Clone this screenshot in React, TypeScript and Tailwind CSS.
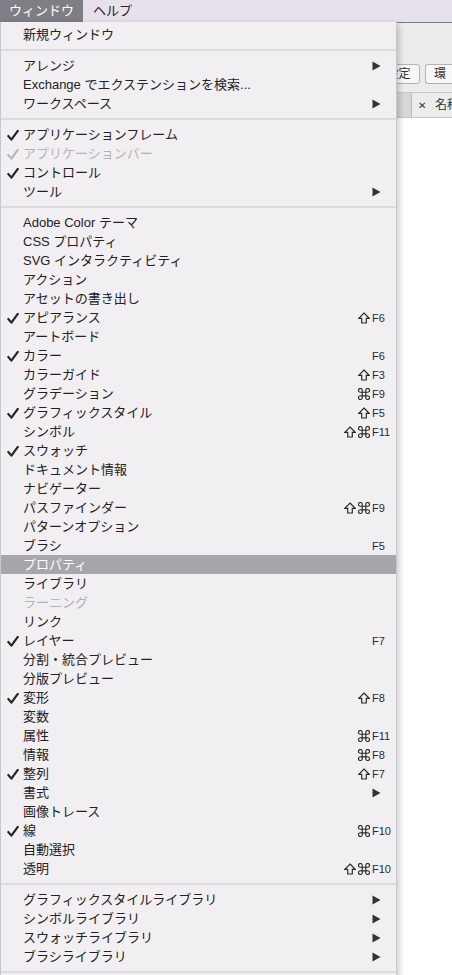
type Item = {
  label: string;
  check?: "on" | "dim";
  disabled?: boolean;
  mods?: string;
  k?: string;
  sub?: boolean;
  active?: boolean;
};

const groups: Item[][] = [
  [{ label: "新規ウィンドウ" }],
  [
    { label: "アレンジ", sub: true },
    { label: "Exchange でエクステンションを検索..." },
    { label: "ワークスペース", sub: true },
  ],
  [
    { label: "アプリケーションフレーム", check: "on" },
    { label: "アプリケーションバー", check: "dim", disabled: true },
    { label: "コントロール", check: "on" },
    { label: "ツール", sub: true },
  ],
  [
    { label: "Adobe Color テーマ" },
    { label: "CSS プロパティ" },
    { label: "SVG インタラクティビティ" },
    { label: "アクション" },
    { label: "アセットの書き出し" },
    { label: "アピアランス", check: "on", mods: "s", k: "F6" },
    { label: "アートボード" },
    { label: "カラー", check: "on", k: "F6" },
    { label: "カラーガイド", mods: "s", k: "F3" },
    { label: "グラデーション", mods: "c", k: "F9" },
    { label: "グラフィックスタイル", check: "on", mods: "s", k: "F5" },
    { label: "シンボル", mods: "sc", k: "F11" },
    { label: "スウォッチ", check: "on" },
    { label: "ドキュメント情報" },
    { label: "ナビゲーター" },
    { label: "パスファインダー", mods: "sc", k: "F9" },
    { label: "パターンオプション" },
    { label: "ブラシ", k: "F5" },
    { label: "プロパティ", active: true },
    { label: "ライブラリ" },
    { label: "ラーニング", disabled: true },
    { label: "リンク" },
    { label: "レイヤー", check: "on", k: "F7" },
    { label: "分割・統合プレビュー" },
    { label: "分版プレビュー" },
    { label: "変形", check: "on", mods: "s", k: "F8" },
    { label: "変数" },
    { label: "属性", mods: "c", k: "F11" },
    { label: "情報", mods: "c", k: "F8" },
    { label: "整列", check: "on", mods: "s", k: "F7" },
    { label: "書式", sub: true },
    { label: "画像トレース" },
    { label: "線", check: "on", mods: "c", k: "F10" },
    { label: "自動選択" },
    { label: "透明", mods: "sc", k: "F10" },
  ],
  [
    { label: "グラフィックスタイルライブラリ", sub: true },
    { label: "シンボルライブラリ", sub: true },
    { label: "スウォッチライブラリ", sub: true },
    { label: "ブラシライブラリ", sub: true },
  ],
];

const Check = ({ dim }: { dim?: boolean }) => (
  <svg width="12" height="11" viewBox="0 0 12 11" className="mt-[2px]">
    <path
      d="M1.3 6 L4.4 9.6 L10.8 0.9"
      fill="none"
      stroke={dim ? "#b9b7bc" : "#262626"}
      strokeWidth="2.2"
      strokeLinecap="round"
      strokeLinejoin="round"
    />
  </svg>
);

const Arrow = () => (
  <svg width="9" height="10" viewBox="0 0 9 10">
    <path d="M0.5 0.5 L8.5 5 L0.5 9.5 Z" fill="#333" />
  </svg>
);

// ⇧
const Shift = () => (
  <svg width="12" height="12" viewBox="0 0 12 12">
    <path
      d="M6 1 L11.2 6.4 H8.3 V11 H3.7 V6.4 H0.8 Z"
      fill="none"
      stroke="#2a2a2a"
      strokeWidth="1.2"
      strokeLinejoin="miter"
    />
  </svg>
);

// ⌘
const Cmd = () => (
  <svg width="12" height="12" viewBox="0 0 12 12">
    <path
      d="M4.2 4.2 V2.8 A1.9 1.9 0 1 0 2.8 4.2 H9.2 A1.9 1.9 0 1 0 7.8 2.8 V9.2 A1.9 1.9 0 1 0 9.2 7.8 H2.8 A1.9 1.9 0 1 0 4.2 9.2 Z"
      fill="none"
      stroke="#2a2a2a"
      strokeWidth="1.15"
    />
  </svg>
);

const Row = ({ it }: { it: Item }) => {
  const text = it.active ? "text-white" : it.disabled ? "text-[#b4b2b7]" : "text-[#222]";
  return (
    <div className={`flex h-[19px] items-center ${it.active ? "bg-[#a7a6ab]" : ""}`}>
      <div className="flex w-[22px] shrink-0 pl-[6px]">{it.check && <Check dim={it.check === "dim"} />}</div>
      <div className={`flex-1 whitespace-nowrap text-[13px] leading-[19px] ${text}`}>{it.label}</div>
      <div className="flex items-center gap-[2px]">
        {it.mods?.split("").map((m, i) => (m === "s" ? <Shift key={i} /> : <Cmd key={i} />))}
      </div>
      <div className="ml-[2px] flex w-[24px] shrink-0 items-center pr-[7px] pt-[1px] text-[11px] leading-none text-[#2a2a2a]">
        {it.sub ? <Arrow /> : it.k}
      </div>
    </div>
  );
};

const Sep = () => (
  <div className="flex h-[12px] items-center">
    <div className="h-[2px] w-full bg-[#dddbdf]" />
  </div>
);

export default function App() {
  return (
    <div className="relative h-[975px] w-[452px] overflow-hidden bg-white [font-family:'Liberation_Sans','Noto_Sans_CJK_JP',sans-serif]">
      {/* menu bar */}
      <div className="flex h-[22px] items-center bg-[#e6e1ea] text-[13px] text-[#222]">
        <div className="flex h-full items-center bg-[#7f7e84] px-[9px] text-white">ウィンドウ</div>
        <div className="pl-[10px]">ヘルプ</div>
      </div>

      {/* window behind */}
      <div className="border-t border-[#7c7b80] bg-[#ececec]">
        <div className="flex h-[69px] items-start gap-[5px] pl-[377px] pt-[41px]">
          <div className="flex h-[20px] w-[43px] shrink-0 items-center justify-center rounded-[3px] border border-[#b3b3b3] bg-[#f7f7f7] text-[12px] text-[#333]">
            設定
          </div>
          <div className="flex h-[20px] w-[40px] shrink-0 items-center rounded-l-[3px] border-y border-l border-[#b3b3b3] bg-[#f7f7f7] pl-[8px] text-[12px] text-[#333]">
            環
          </div>
        </div>
        <div className="flex h-[26px] border-y border-[#c6c6c6]">
          <div className="w-[411px] shrink-0 bg-[#d7d7d7]" />
          <div className="flex flex-1 items-center gap-[9px] whitespace-nowrap border-l border-[#bcbcbc] bg-[#ececec] pl-[6px] text-[12px] text-[#333]">
            <span className="text-[10px]">✕</span>
            <span>名称</span>
          </div>
        </div>
      </div>

      {/* dropdown menu */}
      <div className="absolute left-0 top-[22px] w-[397px] border-x border-[#c9c7cc] bg-[#f1eff2] pt-[3px] shadow-[2px_2px_6px_rgba(0,0,0,0.22)]">
        {groups.map((g, gi) => (
          <div key={gi}>
            {gi > 0 && <Sep />}
            {g.map((it) => (
              <Row key={it.label} it={it} />
            ))}
          </div>
        ))}
        <Sep />
        <div className="h-[20px]" />
      </div>
    </div>
  );
}
